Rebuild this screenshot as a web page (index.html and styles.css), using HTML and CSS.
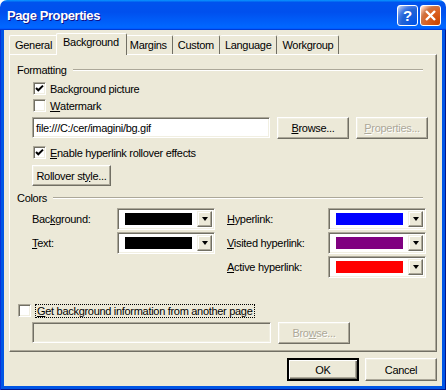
FILE: index.html
```html
<!DOCTYPE html>
<html>
<head>
  <title>Page Properties</title>
  <link rel="stylesheet" href="styles.css">
</head>
<body>
  <div class="window">
    <div class="titlebar">
      <span class="title">Page Properties</span>
      <div class="capButtons">
        <span class="capBtn help">?</span>
        <span class="capBtn close">
          <svg width="13" height="13" viewBox="0 0 13 13"><path d="M2 2 L11 11 M11 2 L2 11" stroke="#fff" stroke-width="2.4"/></svg>
        </span>
      </div>
    </div>
    <div class="frame">
      <div class="client">
        <div class="tabs">
          <span class="tab first">General</span>
          <span class="tab selected">Background</span>
          <span class="tab">Margins</span>
          <span class="tab">Custom</span>
          <span class="tab">Language</span>
          <span class="tab">Workgroup</span>
        </div>

        <div class="panel">
          <div class="groupHead formatting"><span>Formatting</span></div>

          <div class="indent">
            <div class="check first"><span class="box"><svg width="9" height="9" viewBox="0 0 9 9"><path d="M1 4 L3.3 6.3 L8 1.6" fill="none" stroke="#000" stroke-width="2"/></svg></span>Background picture</div>
            <div class="check"><span class="box"></span><u>W</u>atermark</div>

            <div class="fieldRow">
              <div class="field path">file:///C:/cer/imagini/bg.gif</div>
              <div class="btn"><u>B</u>rowse...</div>
              <div class="btn disabled"><u>P</u>roperties...</div>
            </div>

            <div class="check rollover"><span class="box"><svg width="9" height="9" viewBox="0 0 9 9"><path d="M1 4 L3.3 6.3 L8 1.6" fill="none" stroke="#000" stroke-width="2"/></svg></span><u>E</u>nable hyperlink rollover effects</div>

            <div class="btn rolloverBtn">Rollover st<u>y</u>le...</div>
          </div>

          <div class="groupHead colors"><span>Colors</span></div>

          <div class="colorGrid">
            <span class="lbl">Bac<u>k</u>ground:</span>
            <div class="combo"><span class="swatch" style="background:#000"></span><span class="arrow"></span></div>
            <span class="lbl right"><u>H</u>yperlink:</span>
            <div class="combo"><span class="swatch" style="background:#0000ff"></span><span class="arrow"></span></div>

            <span class="lbl"><u>T</u>ext:</span>
            <div class="combo"><span class="swatch" style="background:#000"></span><span class="arrow"></span></div>
            <span class="lbl right"><u>V</u>isited hyperlink:</span>
            <div class="combo"><span class="swatch" style="background:#800080"></span><span class="arrow"></span></div>

            <span></span>
            <span></span>
            <span class="lbl right"><u>A</u>ctive hyperlink:</span>
            <div class="combo"><span class="swatch" style="background:#ff0000"></span><span class="arrow"></span></div>
          </div>

          <div class="check other"><span class="box"></span><span class="focus"><u>G</u>et background information from another page</span></div>

          <div class="fieldRow otherRow">
            <div class="field blank"></div>
            <div class="btn disabled">Bro<u>w</u>se...</div>
          </div>
        </div>

        <div class="footer">
          <div class="btn default">OK</div>
          <div class="btn">Cancel</div>
        </div>
      </div>
    </div>
  </div>
</body>
</html>
```

FILE: styles.css
```css
body {
  margin: 0;
  background: #fff;
  font-family: "Liberation Sans", Arial, sans-serif;
  font-size: 11px;
  letter-spacing: -0.3px;
  color: #000;
}

.window {
  width: 446px;
  height: 390px;
  display: flex;
  flex-direction: column;
}

/* title bar */
.titlebar {
  height: 30px;
  display: flex;
  align-items: center;
  justify-content: space-between;
  padding: 0 5px 0 7px;
  box-sizing: border-box;
  border-radius: 7px 7px 0 0;
  background: linear-gradient(180deg, #0997ff, #0053ee 8%, #0050ee 40%, #0066ff 88%, #0066ff 93%, #005bff 95%, #003dd7 96%, #003dd7);
}

.title {
  color: #fff;
  font-weight: bold;
  font-size: 13px;
  letter-spacing: -0.4px;
  text-shadow: 1px 1px #0f1089;
  padding-top: 1px;
}

.capButtons {
  display: flex;
  gap: 2px;
  padding-top: 1px;
}

.capBtn {
  width: 19px;
  height: 19px;
  border: 1px solid #fff;
  border-radius: 3px;
  display: flex;
  align-items: center;
  justify-content: center;
  color: #fff;
  font-weight: bold;
  font-size: 15px;
  letter-spacing: 0;
}

.help {
  background: radial-gradient(circle at 90% 90%, #0054e9 0, #2263d5 55%, #4479e4 70%, #a3bbec 90%, #fff 100%);
}

.close {
  background: radial-gradient(circle at 90% 90%, #cc4600 0, #dc6527 55%, #cd7546 70%, #ffccb2 90%, #fff 100%);
}

/* window body */
.frame {
  flex: 1;
  padding: 0 4px 4px;
  background: #0055e5;
  box-shadow: inset 1px 0 #0831d9, inset -1px 0 #00138c, inset 0 -1px #00138c;
  display: flex;
}

.client {
  flex: 1;
  min-width: 0;
  background: #ece9d8;
  padding: 3px 5px 0;
}

/* tabs */
.tabs {
  display: flex;
  height: 21px;
}

.tab {
  margin-top: 2px;
  padding: 3px 5px 0 5px;
  border-top: 1px solid #fff;
  border-right: 1px solid #716f64;
  border-radius: 2px 2px 0 0;
}

.tab.first {
  border-left: 1px solid #fff;
}

.tab.selected {
  margin: 0 -2px -1px -2px;
  padding: 2px 7px 0 6px;
  border-left: 1px solid #fff;
  background: #ece9d8;
  position: relative;
  z-index: 1;
}

.panel {
  height: 298px;
  box-sizing: border-box;
  border: 1px solid #fff;
  border-right-color: #716f64;
  border-bottom-color: #716f64;
  box-shadow: inset -1px -1px #aca899;
  padding: 8px 8px 0 8px;
}

/* group headings with etched rule */
.groupHead {
  display: flex;
  align-items: center;
  height: 13px;
  margin: 0 5px 0 -1px;
}

.groupHead::after {
  content: "";
  flex: 1;
  margin-left: 6px;
  border-top: 1px solid #aca899;
  border-bottom: 1px solid #fff;
}

.colors {
  margin-top: 5px;
}

.indent {
  padding-left: 14px;
}

.check {
  display: flex;
  align-items: center;
  height: 13px;
  margin-top: 4px;
}

.check.first {
  margin-top: 6px;
}

.check.rollover {
  margin-top: 7px;
}

.box {
  width: 13px;
  height: 13px;
  box-sizing: border-box;
  margin: 0 4px 0 1px;
  background: #fff;
  border: 1px solid;
  border-color: #aca899 #fff #fff #aca899;
  box-shadow: inset 1px 1px #716f64, inset -1px -1px #f1efe2;
  display: flex;
  align-items: center;
  justify-content: center;
}

.fieldRow {
  display: flex;
  gap: 7px;
  margin-top: 5px;
  height: 22px;
}

.field {
  box-sizing: border-box;
  height: 21px;
  border: 1px solid;
  border-color: #aca899 #fff #fff #aca899;
  box-shadow: inset 1px 1px #716f64, inset -1px -1px #f1efe2;
  background: #fff;
  padding: 4px 3px 0;
}

.path {
  width: 240px;
}

.btn {
  box-sizing: border-box;
  width: 72px;
  flex-shrink: 0;
  height: 22px;
  display: flex;
  align-items: center;
  justify-content: center;
  background: #ece9d8;
  border: 1px solid;
  border-color: #fff #716f64 #716f64 #fff;
  box-shadow: inset -1px -1px #aca899, inset 1px 1px #f1efe2;
}

.btn.disabled {
  color: #aca899;
  text-shadow: 1px 1px #fff;
}

.rolloverBtn {
  width: 79px;
  height: 21px;
  margin-top: 6px;
}

/* colour pickers */
.colorGrid {
  display: grid;
  grid-template-columns: 85px 98px 113px 98px;
  grid-auto-rows: 22px;
  row-gap: 2px;
  margin-top: 4px;
  padding-left: 14px;
  align-items: center;
}

.lbl.right {
  padding-left: 12px;
}

.combo {
  box-sizing: border-box;
  height: 22px;
  border: 1px solid;
  border-color: #aca899 #fff #fff #aca899;
  box-shadow: inset 1px 1px #716f64, inset -1px -1px #f1efe2;
  background: #fff;
  display: flex;
  align-items: center;
  padding: 0 2px 0 7px;
}

.swatch {
  width: 67px;
  height: 12px;
}

.arrow {
  margin-left: auto;
  width: 15px;
  height: 16px;
  box-sizing: border-box;
  background: #ece9d8;
  border: 1px solid;
  border-color: #f1efe2 #716f64 #716f64 #f1efe2;
  box-shadow: inset -1px -1px #aca899, inset 1px 1px #fff;
  display: flex;
  align-items: center;
  justify-content: center;
}

.arrow::before {
  content: "";
  border-top: 4px solid #000;
  border-left: 3.5px solid transparent;
  border-right: 3.5px solid transparent;
}

.check.other {
  margin-top: 26px;
}

.check.other .box {
  margin-left: 0;
}

.focus {
  border: 1px dotted #000;
  padding: 0 1px;
  line-height: 12px;
}

.otherRow {
  padding-left: 14px;
  margin-top: 5px;
}

.blank {
  width: 239px;
  background: #ece9d8;
}

/* dialog buttons */
.footer {
  display: flex;
  justify-content: flex-end;
  gap: 6px;
  margin-top: 6px;
}

.footer .btn {
  height: 23px;
}

.btn.default {
  border-width: 2px;
  border-color: #000;
  box-shadow: inset 1px 1px #fff, inset -1px -1px #716f64, inset -2px -2px #aca899;
}
```
